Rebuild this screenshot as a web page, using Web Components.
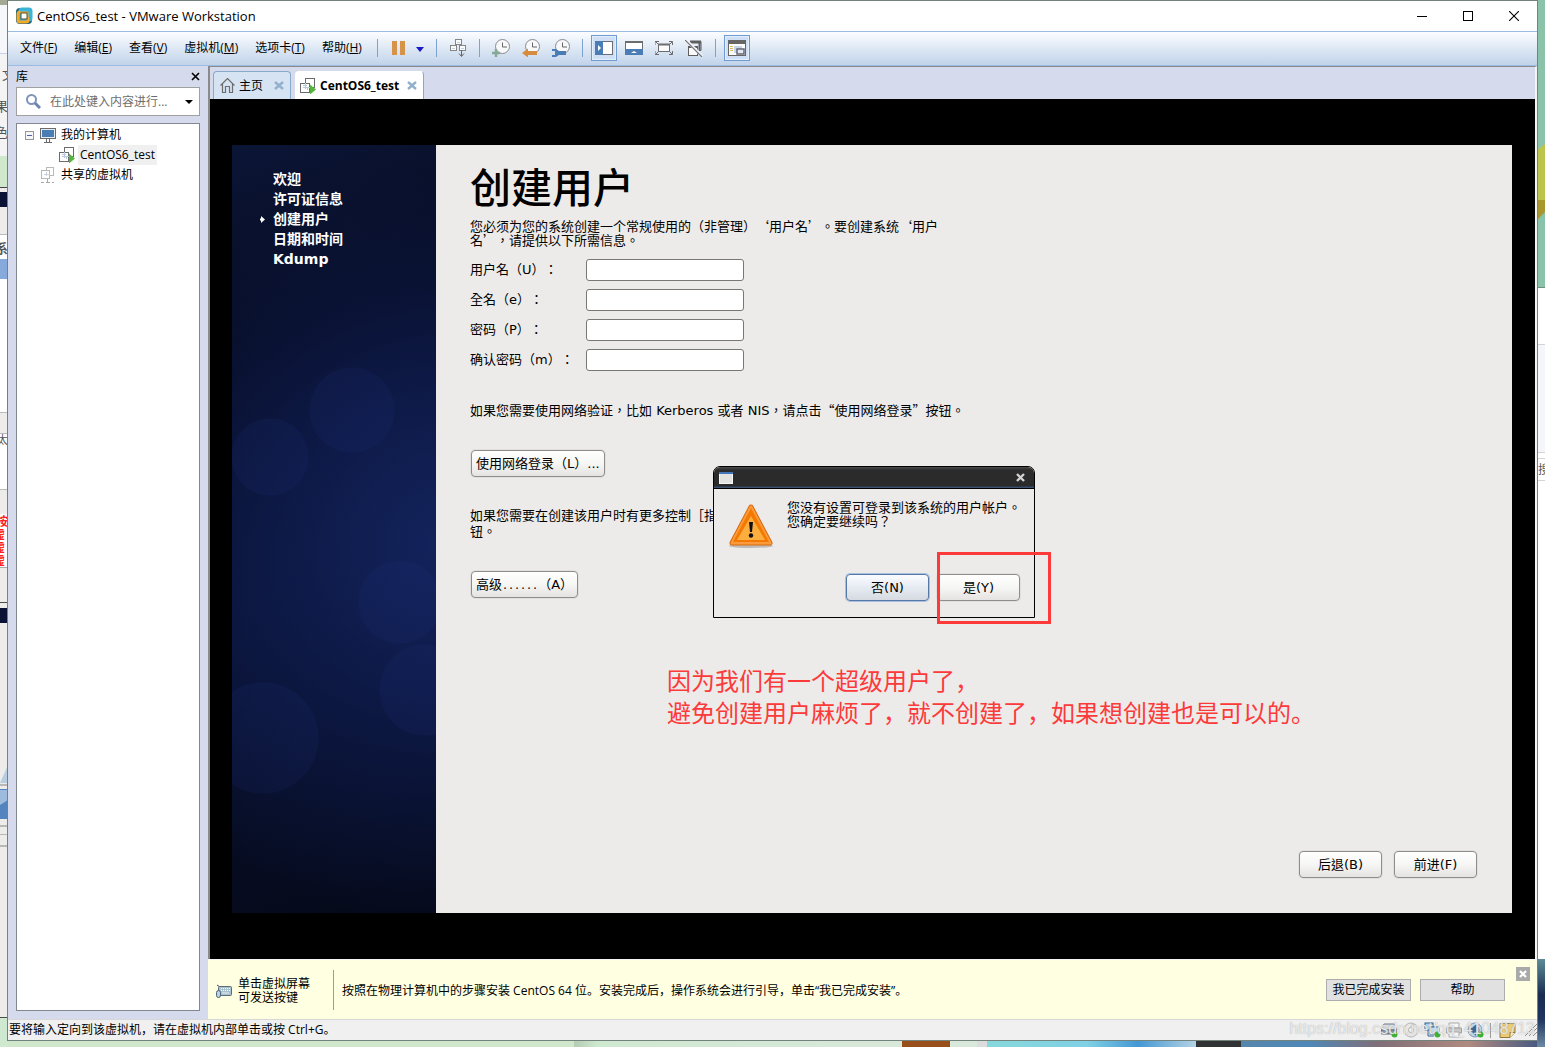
<!DOCTYPE html>
<html lang="zh-CN">
<head>
<meta charset="utf-8">
<title>CentOS6_test - VMware Workstation</title>
<style>
    body {
        margin: 0;
        background: #cfe6d0;
        color: #000;
        font: 12px/16px "Open Sans", "Noto Sans CJK SC", sans-serif;
    }
</style>
</head>
<body>
<host-desktop>
    <vm-window>
        <title-bar slot="title">CentOS6_test - VMware Workstation</title-bar>
        <menu-bar slot="menu"></menu-bar>
        <library-panel slot="library"></library-panel>
        <tab-bar slot="tabs"></tab-bar>
        <!-- the guest centres its punctuation, as the zh-TW glyphs do -->
        <guest-screen slot="screen" lang="zh-TW">
            <setup-steps slot="steps"></setup-steps>
            <user-form slot="form"></user-form>
            <gtk-dialog slot="overlay"></gtk-dialog>
            <screen-note slot="overlay" lang="zh-CN">因为我们有一个超级用户了，<br>避免创建用户麻烦了，就不创建了，如果想创建也是可以的。</screen-note>
        </guest-screen>
        <hint-bar slot="hint"></hint-bar>
        <status-bar slot="status">要将输入定向到该虚拟机，请在虚拟机内部单击或按 Ctrl+G。</status-bar>
    </vm-window>
</host-desktop>

<script>
// every element here is a fixed template in an open shadow root
class BaseElement extends HTMLElement {
    constructor() {
        super();
        this._shadowDOM = this.attachShadow({mode: "open"});
    }

    connectedCallback() {
        this._shadowDOM.innerHTML = this.render();
    }
}

const ICONS = {
    logo: [18, 18, `
        <rect x="1" y="1" width="16" height="16" rx="4" fill="#1d5f78"/>
        <rect x="5" y="2" width="11" height="11" rx="2" fill="none" stroke="#3cb4d8" stroke-width="3"/>
        <rect x="3" y="5" width="10" height="10" rx="2" fill="none" stroke="#f3a92c" stroke-width="3"/>
        <path d="M5 3h9q1 0 1 1v6" fill="none" stroke="#3cb4d8" stroke-width="3"/>
        <rect x="6" y="6" width="6" height="6" fill="#fff" stroke="#5a4a20"/>`],
    minimize: [10, 10, `<path d="M0 5.500h10" stroke="#000"/>`],
    maximize: [10, 10, `<rect x=".5" y=".5" width="9" height="9" fill="none" stroke="#000"/>`],
    close: [10, 10, `<path d="M0 0l10 10M10 0L0 10" stroke="#000" stroke-width="1.100"/>`],
    pause: [14, 14, `<path d="M0 0h5v14H0zM8 0h5v14H8z" fill="#d6944a"/>`],
    drop: [8, 5, `<path d="M0 0h8L4 5z" fill="#1a1ac8"/>`],
    send: [16, 18, `
        <g fill="#f8fafc" stroke="#858585"><rect x="5.500" y=".5" width="6" height="5"/><rect x=".5" y="6.500" width="6" height="5"/><rect x="9.500" y="6.500" width="6" height="5"/></g>
        <path d="M7 3.500h3M2 9.500h3M11 9.500h3" stroke="#c3cede"/>
        <path d="M11.500 11v6M9 14.500l2.500 3 2.500-3" fill="none" stroke="#666"/>`],
    snap: [18, 18, `
        <circle cx="10.500" cy="7.500" r="7" fill="#f7f8fa" stroke="#8a8a8a"/><path d="M10.500 3.500v4.500H15" fill="none" stroke="#666"/>
        <path d="M4 10v8M0 14h8" stroke="#86a896" stroke-width="2.500"/>`],
    revert: [18, 18, `
        <circle cx="10.500" cy="7.500" r="7" fill="#f7f8fa" stroke="#8a8a8a"/><path d="M10.500 3.500v4.500H15" fill="none" stroke="#666"/>
        <path d="M0 14l6-4.500V12h9v4H6v2.500z" fill="#d68c3c"/>`],
    manage: [18, 18, `
        <circle cx="10.500" cy="7.500" r="7" fill="#f7f8fa" stroke="#8a8a8a"/><path d="M10.500 3.500v4.500H15" fill="none" stroke="#666"/>
        <path d="M0 10h4l3 2h7v4H7l-3 2H0v-2h3v-4H0z" fill="#4a7db5"/>`],
    library: [18, 14, `
        <rect x=".5" y=".5" width="17" height="13" fill="#fff" stroke="#6d6d6d"/><path d="M0 0h8v14H0z" fill="#4a7db5"/>
        <path d="M3 4l3 3-3 3z" fill="#fff"/>`],
    thumbs: [18, 14, `
        <rect x=".5" y=".5" width="17" height="13" fill="#fff" stroke="#6d6d6d"/><path d="M0 8h18v6H0z" fill="#4a7db5"/>
        <path d="M6 12l3-2 3 2z" fill="#fff"/><path d="M0 1h18" stroke="#6d6d6d" stroke-width="2"/>`],
    full: [18, 14, `
        <rect x="3.500" y="3.500" width="11" height="7" fill="#fafafa" stroke="#6d6d6d"/><path d="M3 3.500h12" stroke="#6d6d6d" stroke-width="2"/>
        <path d="M0 4V.5h4M14 .5h3.500V4M0 10v3.500h4M14 13.500h3.500V10M1 1l3 3M17 1l-3 3M1 13l3-3M17 13l-3-3" fill="none" stroke="#6d6d6d"/>`],
    unity: [18, 17, `
        <path d="M5 1.500h11v9h-2" fill="none" stroke="#5e5e5e"/><path d="M5 2h11" stroke="#5e5e5e" stroke-width="3"/><path d="M14.500 1v10" stroke="#5e5e5e" stroke-width="2"/>
        <rect x="3.500" y="6.500" width="9" height="9" fill="#fafafa" stroke="#5e5e5e"/><path d="M3 7h10" stroke="#5e5e5e" stroke-width="2"/>
        <path d="M1 0l17 17" stroke="#eef3fa" stroke-width="3"/><path d="M0 0l17 17" stroke="#777" stroke-width="1.200"/>`],
    consoleView: [18, 16, `
        <rect x=".5" y=".5" width="17" height="15" fill="#fdfdfd" stroke="#666"/><path d="M0 2h18" stroke="#666" stroke-width="4"/>
        <path d="M2 6.500h3M2 8.500h3M2 10.500h3" stroke="#e0b860"/><path d="M6 6h8v7H6z" fill="#c8d6ea"/>
        <rect x="9" y="9" width="7" height="5" fill="#e2e9f3" stroke="#667" stroke-width="1.500"/>`],
    search: [15, 15, `<circle cx="5.500" cy="5.500" r="4.500" fill="none" stroke="#7d93b8" stroke-width="2"/><path d="M9 9l5 5" stroke="#6d85b0" stroke-width="3"/>`],
    caret: [8, 4, `<path d="M0 0h8L4 4z" fill="#000"/>`],
    cross: [9, 9, `<path d="M1 1l7 7M8 1L1 8" stroke="#000" stroke-width="1.600"/>`],
    tabClose: [10, 9, `<path d="M1 1l8 7M9 1L1 8" stroke="#92b0cc" stroke-width="2.400"/>`],
    home: [15, 15, `<path d="M.5 7.500l7-7 7 7M2.500 6v8.500h3v-6h4v6h3V6" fill="none" stroke="#6d6d6d" stroke-width="1.200"/>`],
    vm: [16, 16, `
        <rect x="5.500" y=".5" width="9" height="9" fill="#fff" stroke="#6b6b6b"/><rect x=".5" y="5.500" width="9" height="9" fill="#fff" stroke="#6b6b6b"/>
        <path d="M5.500 4v7M3 9.500h7M3 7.500h4M7.500 9v3" stroke="#b9c9dd"/><path d="M5.500 5V.5h9v6" fill="none" stroke="#6b6b6b"/>
        <path d="M10 6.500l6 5-6 5z" fill="#55b53c"/>`],
    shared: [14, 16, `
        <g fill="#fff" stroke="#b8b8b8"><rect x="5.500" y=".5" width="7" height="8"/><rect x=".5" y="3.500" width="8" height="8"/></g>
        <path d="M6.500 12v3M0 15.500h3M5 15.500h4M11 15.500h2" stroke="#a8a8a8"/><path d="M3 7.500h6M5.500 5v4" stroke="#ccd3dd"/>`],
    computer: [16, 15, `
        <rect x=".5" y=".5" width="15" height="10" fill="#4a7db5" stroke="#6b6b6b"/><rect x="1.500" y="1.500" width="13" height="8" fill="none" stroke="#e4ecf5"/>
        <path d="M6.500 11v3M9.500 11v3M4 14.500h8" stroke="#6b6b6b"/>`],
    minus: [9, 9, `<rect x=".5" y=".5" width="8" height="8" fill="#f6f6f6" stroke="#969696"/><path d="M2 4.500h5" stroke="#4b63a7"/>`],
    keyboard: [17, 15, `
        <path d="M1 1l3 2" stroke="#444"/><rect x="2.500" y="2.500" width="13" height="9" rx="1" fill="#a9c0ce" stroke="#5d6c77"/>
        <path d="M5 4.500h9M5 6.500h9" stroke="#fff" stroke-dasharray="1 1"/><path d="M6 9h7" stroke="#e6eff5"/>
        <rect x=".5" y="6.500" width="4" height="7" rx="2" fill="#b6d3ea" stroke="#4d6477"/>`],
    hintClose: [14, 14, `<path d="M0 0h14v14H0z" fill="#a9a9a9"/><path d="M4 4l6 6M10 4l-6 6" stroke="#fff" stroke-width="2.200"/>`],
    disk: [17, 16, `
        <path d="M3 2h10l3 6H0z" fill="#d3dae2" stroke="#6f7a86"/><path d="M.5 8h15v4H.5z" fill="#8696a8" stroke="#5b6673"/>
        <circle cx="13.500" cy="12.500" r="3" fill="#3faf35"/>`],
    cd: [16, 16, `<circle cx="8" cy="8" r="7" fill="#e7e7e7" stroke="#b3b3b3"/><circle cx="8" cy="8" r="2.500" fill="#f8f8f8" stroke="#b3b3b3"/><path d="M8 5.500L11 2" stroke="#ccc" stroke-width="2"/>`],
    net: [17, 16, `
        <rect x="1" y="1" width="8" height="7" fill="#a9d3f0" stroke="#31618e"/><rect x="6" y="5" width="9" height="7" fill="#bfe0f7" stroke="#31618e"/>
        <path d="M4 8v6h6" fill="none" stroke="#31618e"/><circle cx="13.500" cy="12.500" r="3" fill="#3faf35"/>`],
    printer: [16, 16, `<path d="M3 1h10v5H3z" fill="#f6f6f6" stroke="#a9a9a9"/><path d="M.5 6h15v5H.5z" fill="#c9c9c9" stroke="#a0a0a0"/><path d="M3 10h10v5H3z" fill="#f6f6f6" stroke="#a9a9a9"/>`],
    sound: [17, 16, `
        <circle cx="8" cy="8" r="7" fill="#b8d5ec" stroke="#7b9ab5"/><path d="M3 6h2l4-4v12L5 10H3z" fill="#3b6892"/>
        <path d="M11 5q2 3 0 6" fill="none" stroke="#3b6892"/><circle cx="13.500" cy="12.500" r="3" fill="#3faf35"/>`],
    note: [17, 15, `<path d="M1 .5h15v9l-5 5H1z" fill="#ecca76" stroke="#8f7a3c"/><path d="M16 9.500h-5v5" fill="#fff1bb" stroke="#8f7a3c"/>`],
    grip: [12, 12, `<path d="M0 12L12 0M4 12l8-8M8 12l4-4" stroke="#8c8c8c"/>`],
    arrow: [5, 7, `<path d="M1 0l4 3.500L1 7V4.500H0v-2h1z" fill="#fff"/>`],
    dialogIcon: [14, 12, `<rect x=".5" y=".5" width="13" height="11" fill="#e2e2df" stroke="#f7f7f7"/><path d="M0 1h14" stroke="#4376b8" stroke-width="2"/>`],
    dialogClose: [9, 9, `<path d="M1 1l7 7M8 1L1 8" stroke="#d2d2d2" stroke-width="2.400"/>`],
    warning: [46, 46, `
        <defs><linearGradient id="w" x2="0" y2="1"><stop offset="0" stop-color="#f9a04e"/><stop offset="1" stop-color="#f57900"/></linearGradient></defs>
        <ellipse cx="23" cy="43" rx="22" ry="2" fill="#000" opacity=".2"/>
        <path d="M23 4L42 40H4z" fill="url(#w)" stroke="#d9680c" stroke-width="5" stroke-linejoin="round"/>
        <path d="M23 4L42 40H4z" fill="#f57900" stroke="#fa9c3e" stroke-width="3" stroke-linejoin="round"/>
        <path d="M23 5L41 39H5z" fill="#f57900"/><path d="M23 13L37 37H9z" fill="#fcaf3e"/>
        <path d="M21 19h4l-1 10h-2z" fill="#111"/><circle cx="23" cy="32.500" r="2.200" fill="#111"/>`]
};

class VmIcon extends BaseElement {
    render() {
        const [width, height, shapes] = ICONS[this.getAttribute("name")];
        return `
        <style>
            :host { display: inline-flex; flex: none; }
            svg { display: block; }
        </style>
        <svg width="${width}" height="${height}" viewBox="0 0 ${width} ${height}" aria-hidden="true">${shapes}</svg>`;
    }
}

/* The desktop shows only as thin strips round the window. */
class HostDesktop extends BaseElement {
    render() {
        return `
        <style>
            :host {
                display: grid;
                grid-template: "left top right" 1px "left window right" 1fr "left bottom right" 7px / 8px minmax(0, 1fr) 8px;
                min-height: 100vh;
            }
            svg { display: block; width: 8px; height: 100%; overflow: hidden; }
            .left { grid-area: left; background: #cfe8d0; height: 0; min-height: 100%; }
            .right { grid-area: right; background: linear-gradient(#5d8c98, #1a2c50 36px, #20345e 60px, #6d8aa4) left bottom / 8px 88px no-repeat #fff; height: 0; min-height: 100%; }
            .top { grid-area: top; background: #6d7f78; }
            .bottom {
                grid-area: bottom;
                background: linear-gradient(90deg, #cfe8cc 566px, #b4ccb4 566px, #cfe8d0 590px, #d8e8da 894px, #984f1a 894px, #984f1a 942px,
                    #d8e8da 942px, #d8e8da 969px, #dcdcdc 969px, #dcdcdc 979px, #86d8dc 979px, #7fd0e4 1080px, #4498d4 1130px, #b4d2e4 1188px,
                    #303234 1188px, #303234 1233px, #5686ac 1233px, #4e88b8 1300px, #806e78 1370px, #b08a80 1460px, #4a5a80);
            }
            ::slotted(*) { grid-area: window; }
        </style>
        <div class="left"><svg aria-hidden="true" font-family="Noto Sans CJK SC" font-size="13" fill="#555">
            <path fill="#a4a993" d="M0 0h8v5H0z"/><path fill="#f6f7fb" d="M0 5h8v48H0z"/><path fill="#c9d2e6" d="M0 53h8v1H0z"/>
            <path fill="#f4f4f4" d="M0 54h8v102H0z"/><path fill="#cfe8cc" d="M0 156h8v31H0z"/><path fill="#444" d="M0 187h8v1H0z"/>
            <path fill="#edecea" d="M0 188h8v829H0z"/><path fill="#0a1333" d="M0 192h8v15H0zM0 608h8v15H0z"/>
            <path fill="#fff" d="M0 235h8v177H0zM0 434h8v55H0z"/><path fill="#86aadb" d="M0 259h8v20H0z"/>
            <path fill="#bbb" d="M0 234h8v1H0zM0 412h8v1H0zM0 433h8v1H0zM0 489h8v1H0z"/>
            <path fill="#fff" d="M0 514h8v53H0z"/><path fill="#aaa" d="M0 567h8v1H0z"/><path fill="#465046" d="M0 602h8v1H0zM0 1017h8v1H0z"/>
            <path fill="#b7cde3" d="M0 783l8-18v18z"/><path fill="#5484be" d="M0 789h8v30H0z"/><path fill="#9dbbdc" d="M0 790h8v10L0 805z"/>
            <path fill="#b8b8b6" d="M0 784h8v2H0zM0 825h8v2H0zM0 834h8v1H0zM0 845h8v2H0z"/>
            <text x="2" y="79">文</text><text x="-5" y="111">果</text><text x="-5" y="137">色</text>
            <text x="-5" y="253" font-weight="700">系</text><text x="-3" y="444" font-size="11">太</text>
            <g fill="#f22" font-size="12" font-weight="700"><text x="-4" y="526">按</text><text x="-7" y="539">虚</text><text x="-7" y="552">虚</text><text x="-7" y="565">虚</text></g>
        </svg></div>
        <div class="top"></div>
        <div class="right"><svg aria-hidden="true">
            <path fill="#8bc2aa" d="M0 0h8v287H0z"/><path fill="#bcc44b" d="M0 150l8-6v56H0z"/><path fill="#a8962f" d="M0 200h8v12l-8 8z"/>
            <path fill="#6e8f7c" d="M0 287h8v1H0z"/><path fill="#f5f6fa" d="M0 345h8v107H0z"/>
            <path fill="#d4d4d8" d="M0 344h8v1H0zM0 452h8v1H0zM0 458h8v1H0zM0 480h8v1H0z"/>
            <text x="1" y="474" font-family="Noto Sans CJK SC" font-size="12" fill="#555">搜</text>
        </svg></div>
        <div class="bottom"></div>
        <slot></slot>`;
    }
}

class VmWindow extends BaseElement {
    render() {
        return `
        <style>
            :host {
                display: flex;
                flex-direction: column;
                background: #d5daec;
                box-shadow: 0 0 0 1px #74827c;
            }
            .body { flex: 1; display: grid; grid-template-columns: 200px minmax(0, 1fr); }
            .main { display: flex; flex-direction: column; }
            .view {
                flex: 1;
                display: flex;
                flex-direction: column;
                border: solid #8a8a8a;
                border-width: 1px 0 0 2px;
                border-right: 2px solid #f4f4f4;
            }
            slot[name="screen"]::slotted(*) { flex: 1; }
        </style>
        <slot name="title"></slot>
        <slot name="menu"></slot>
        <div class="body">
            <slot name="library"></slot>
            <div class="main">
                <div class="view"><slot name="tabs"></slot><slot name="screen"></slot></div>
                <slot name="hint"></slot>
            </div>
        </div>
        <slot name="status"></slot>`;
    }
}

class TitleBar extends BaseElement {
    render() {
        return `
        <style>
            :host { display: flex; align-items: center; height: 30px; padding-left: 7px; background: #fff; font-size: 13px; }
            .text { flex: 1; padding-left: 4px; }
            button { display: grid; place-items: center; width: 46px; height: 30px; padding: 0; border: 0; background: none; }
        </style>
        <vm-icon name="logo"></vm-icon>
        <span class="text"><slot></slot></span>
        <button aria-label="最小化"><vm-icon name="minimize"></vm-icon></button>
        <button aria-label="最大化"><vm-icon name="maximize"></vm-icon></button>
        <button aria-label="关闭"><vm-icon name="close"></vm-icon></button>`;
    }
}

class MenuBar extends BaseElement {
    render() {
        const menus = [["文件", "F"], ["编辑", "E"], ["查看", "V"], ["虚拟机", "M"], ["选项卡", "T"], ["帮助", "H"]];
        const tool = (name, label, on) => `<button class="tool ${on ? "on" : ""}" aria-label="${label}"><vm-icon name="${name}"></vm-icon></button>`;
        return `
        <style>
            :host {
                display: flex;
                align-items: center;
                height: 32px;
                padding: 0 0 1px 12px;
                border: 1px solid #9cbbe0;
                border-width: 1px 0;
                background: linear-gradient(#fbfdff, #c1d3ea);
            }
            button { padding: 0; border: 0; background: none; color: inherit; font: inherit; }
            .menus { display: flex; gap: 17px; }
            .tools { display: flex; align-items: center; gap: 4px; margin-left: 15px; }
            .tool { box-sizing: border-box; display: grid; place-items: center; width: 26px; height: 26px; }
            .on { border: 1px solid #6f9bd1; background: #cfe0f6; box-shadow: inset 0 0 0 1px #e4effc; }
            .power { display: flex; }
            .drop { width: 16px; }
            i { width: 1px; height: 18px; margin: 0 4px; background: #7ba2d0; }
            i:first-child { margin-left: 0; }
        </style>
        <nav class="menus">${menus.map(([text, key]) => `<button>${text}(<u>${key}</u>)</button>`).join("")}</nav>
        <div class="tools">
            <i></i>
            <div class="power">${tool("pause", "挂起")}<button class="drop" aria-label="电源"><vm-icon name="drop"></vm-icon></button></div>
            <i></i>
            ${tool("send", "发送 Ctrl+Alt+Del")}
            <i></i>
            ${tool("snap", "拍摄快照")}${tool("revert", "恢复快照")}${tool("manage", "管理快照")}
            <i></i>
            ${tool("library", "显示库", true)}${tool("thumbs", "显示缩略图")}${tool("full", "全屏")}${tool("unity", "Unity")}
            <i></i>
            ${tool("consoleView", "控制台视图", true)}
        </div>`;
    }
}

class LibraryPanel extends BaseElement {
    render() {
        return `
        <style>
            :host { display: flex; flex-direction: column; padding: 0 8px 8px; }
            header { display: flex; align-items: center; justify-content: space-between; height: 21px; }
            button { display: grid; place-items: center; padding: 0; border: 0; background: none; }
            .search { display: flex; align-items: center; height: 27px; padding: 0 6px 0 9px; margin-bottom: 7px; border: 1px solid #a0a0a0; background: #fff; }
            input { flex: 1; min-width: 0; padding: 0 0 0 9px; border: 0; outline: 0; background: none; font: inherit; }
            input::placeholder { color: #6d6d6d; }
            ul { flex: 1; margin: 0; padding: 1px 0 0 8px; border: 1px solid #828790; background: #fff; list-style: none; }
            li { display: flex; align-items: center; height: 20px; }
            li span { padding: 0 2px; margin-left: 3px; line-height: 20px; }
            li vm-icon:first-child { margin-right: 6px; }
            li.child { padding-left: 34px; }
            li.child vm-icon, li.shared vm-icon { margin-right: 0; }
            li.child span { margin-left: 3px; background: #f0f0f0; }
            li.shared { padding-left: 16px; }
            li.shared span { margin-left: 4px; }
        </style>
        <header>库<button aria-label="关闭库"><vm-icon name="cross"></vm-icon></button></header>
        <div class="search">
            <vm-icon name="search"></vm-icon>
            <input type="text" aria-label="搜索" placeholder="在此处键入内容进行...">
            <button aria-label="搜索选项"><vm-icon name="caret"></vm-icon></button>
        </div>
        <ul>
            <li><vm-icon name="minus"></vm-icon><vm-icon name="computer"></vm-icon><span>我的计算机</span></li>
            <li class="child"><vm-icon name="vm"></vm-icon><span>CentOS6_test</span></li>
            <li class="shared"><vm-icon name="shared"></vm-icon><span>共享的虚拟机</span></li>
        </ul>`;
    }
}

class TabBar extends BaseElement {
    render() {
        return `
        <style>
            :host { display: flex; align-items: flex-end; gap: 4px; height: 32px; padding-left: 3px; }
            button {
                box-sizing: border-box;
                display: flex;
                align-items: center;
                height: 28px;
                padding: 0 6px;
                border: 1px solid #86a8cb;
                border-bottom: 0;
                border-radius: 4px 4px 0 0;
                background: #d6e3f2;
                color: inherit;
                font: inherit;
            }
            .active { background: #fff; border-left-color: #fff; border-top-color: #fff; padding: 0 6px 0 4px; font-weight: 700; }
            span { padding: 0 11px 0 4px; }
            .active span { padding-right: 8px; }
        </style>
        <button><vm-icon name="home"></vm-icon><span>主页</span><vm-icon name="tabClose"></vm-icon></button>
        <button class="active"><vm-icon name="vm"></vm-icon><span>CentOS6_test</span><vm-icon name="tabClose"></vm-icon></button>`;
    }
}

class GuestScreen extends BaseElement {
    render() {
        return `
        <style>
            :host {
                display: flex;
                padding: 46px 23px 46px 22px;
                background: #000;
                font: 13px/16px "DejaVu Sans", "Noto Sans CJK TC", sans-serif;
                text-spacing-trim: space-all;
            }
            .screen { position: relative; flex: 1; display: grid; grid-template-columns: 204px minmax(0, 1fr); background: #edebea; }
        </style>
        <div class="screen">
            <slot name="steps"></slot>
            <slot name="form"></slot>
            <slot name="overlay"></slot>
        </div>`;
    }
}

class SetupSteps extends BaseElement {
    render() {
        const spot = (x, y, r) => `radial-gradient(circle at ${x}px ${y}px, rgba(38, 58, 150, .1) ${r}px, transparent ${r + 1}px)`;
        return `
        <style>
            :host {
                display: block;
                padding: 24px 0 0 28px;
                background:
                    ${spot(120, 265, 42)}, ${spot(38, 312, 38)}, ${spot(168, 457, 41)}, ${spot(193, 545, 45)}, ${spot(31, 593, 55)},
                    radial-gradient(circle at 105% 52%, #13235c, rgba(15, 28, 78, .75) 170px, transparent 380px),
                    linear-gradient(160deg, #0b1536, #060b20 25%, #081130 55%, #050919);
                color: #fff;
                font-size: 14px;
                font-weight: 700;
            }
            ol { margin: 0; padding: 0; list-style: none; }
            li { display: flex; align-items: center; height: 20px; padding-left: 13px; }
            .current { padding-left: 0; gap: 8px; }
        </style>
        <ol>
            <li>欢迎</li>
            <li>许可证信息</li>
            <li class="current"><vm-icon name="arrow"></vm-icon>创建用户</li>
            <li>日期和时间</li>
            <li>Kdump</li>
        </ol>`;
    }
}

class GtkButton extends BaseElement {
    render() {
        return `
        <style>
            :host { display: inline-block; }
            button {
                box-sizing: border-box;
                min-width: 83px;
                height: 27px;
                padding: 0 4px;
                border: 1px solid #8e8d8b;
                border-radius: 4px;
                background: linear-gradient(#fff, #f6f6f5 50%, #e4e3e1);
                box-shadow: 0 0 0 1px #e2e0de;
                color: #000;
                font: inherit;
                white-space: nowrap;
            }
            :host([focused]) button { border-color: #5478a8; background: linear-gradient(#fafcff, #e6ebf3 50%, #d6dae0); box-shadow: 0 0 0 1px #a9c0e0; }
        </style>
        <button><slot></slot></button>`;
    }
}

class GtkField extends BaseElement {
    render() {
        return `
        <style>
            :host { display: grid; grid-template-columns: 116px 158px; align-items: center; }
            label { white-space: nowrap; }
            input {
                box-sizing: border-box;
                width: 100%;
                height: 22px;
                padding: 0 4px;
                border: 1px solid #787774;
                border-radius: 3px;
                outline: 0;
                background: #fff;
                font: inherit;
            }
        </style>
        <label for="value"><slot></slot></label>
        <input id="value" type="${this.getAttribute("type") || "text"}">`;
    }
}

class UserForm extends BaseElement {
    render() {
        return `
        <style>
            :host { display: flex; flex-direction: column; padding: 20px 35px 35px 34px; }
            h1 { margin: 0 0 7px; font-size: 41px; line-height: 48px; font-weight: 500; }
            p { margin: 31px 0; }
            .intro { margin: 0 0 11px; line-height: 14px; }
            .wide { font-family: "Noto Sans CJK TC", sans-serif; line-height: 0; }
            .dots { font: 10px/0 "DejaVu Sans Mono", monospace; }
            .fields { display: grid; gap: 8px; padding-bottom: 1px; }
            .inline { align-self: flex-start; margin-left: 1px; }
            footer { display: flex; justify-content: flex-end; gap: 12px; margin-top: auto; }
        </style>
        <h1>创建用户</h1>
        <p class="intro">您必须为您的系统创建一个常规使用的（非管理）<span class="wide">‘</span>用户名<span class="wide">’</span>。要创建系统<span class="wide">‘</span>用户<br>名<span class="wide">’</span>，请提供以下所需信息。</p>
        <div class="fields">
            <gtk-field>用户名（U）：</gtk-field>
            <gtk-field>全名（e）：</gtk-field>
            <gtk-field type="password">密码（P）：</gtk-field>
            <gtk-field type="password">确认密码（m）：</gtk-field>
        </div>
        <p>如果您需要使用网络验证，比如 Kerberos 或者 NIS，请点击<span class="wide">“</span>使用网络登录<span class="wide">”</span>按钮。</p>
        <gtk-button class="inline">使用网络登录（L）...</gtk-button>
        <p>如果您需要在创建该用户时有更多控制［指<br>钮。</p>
        <gtk-button class="inline">高级<span class="dots">......</span>（A）</gtk-button>
        <footer>
            <gtk-button>后退(B)</gtk-button>
            <gtk-button>前进(F)</gtk-button>
        </footer>`;
    }
}

class GtkDialog extends BaseElement {
    render() {
        return `
        <style>
            :host { position: absolute; left: calc(50% - 159px); top: 321px; width: 322px; }
            .window { border: 1px solid #000; border-radius: 7px 7px 0 0; background: #edebea; overflow: hidden; }
            header {
                display: flex;
                align-items: center;
                justify-content: space-between;
                height: 21px;
                padding: 0 9px 0 5px;
                border-bottom: 1px solid #000;
                background: linear-gradient(#4a4a4a, #2c2c2c 3px, #2a2a2a 19px, #3f5f8a);
            }
            header button { display: grid; place-items: center; padding: 0; border: 0; background: none; }
            .message { display: flex; gap: 13px; padding: 14px 0 0 14px; line-height: 14px; }
            p { margin: -2px 0 0; white-space: nowrap; }
            footer { display: flex; justify-content: flex-end; gap: 8px; padding: 25px 14px 16px; }
            .mark { position: absolute; left: 224px; top: 86px; box-sizing: border-box; width: 114px; height: 72px; border: 3px solid #fc3a3a; }
        </style>
        <div class="window" role="dialog">
            <header><vm-icon name="dialogIcon"></vm-icon><button aria-label="关闭"><vm-icon name="dialogClose"></vm-icon></button></header>
            <div class="message">
                <vm-icon name="warning"></vm-icon>
                <p>您没有设置可登录到该系统的用户帐户。<br>您确定要继续吗？</p>
            </div>
            <footer>
                <gtk-button focused>否(N)</gtk-button>
                <gtk-button>是(Y)</gtk-button>
            </footer>
        </div>
        <div class="mark"></div>`;
    }
}

class ScreenNote extends BaseElement {
    render() {
        return `
        <style>
            :host {
                position: absolute;
                left: calc(50% - 205px);
                top: 519px;
                color: #fc3a3a;
                font: 24px/32px "Noto Sans CJK SC", sans-serif;
                white-space: nowrap;
            }
        </style>
        <slot></slot>`;
    }
}

class HintBar extends BaseElement {
    render() {
        return `
        <style>
            :host { display: flex; align-items: center; height: 59px; padding-left: 8px; border-top: 1px solid #f4f4f4; background: #ffffe1; }
            .keys { display: flex; align-items: center; gap: 5px; width: 117px; padding-top: 3px; line-height: 14px; }
            .text { flex: 1; padding: 13px 0 11px 8px; border-left: 1px solid #9a9aa8; }
            button {
                box-sizing: border-box;
                width: 85px;
                height: 22px;
                margin-right: 9px;
                padding: 0;
                border: 1px solid #adadad;
                background: #e1e1e1;
                color: #000;
                font: inherit;
            }
            .close { display: grid; width: 14px; height: 14px; margin: 0 7px 31px 2px; border: 0; }
        </style>
        <div class="keys"><vm-icon name="keyboard"></vm-icon><span>单击虚拟屏幕<br>可发送按键</span></div>
        <div class="text">按照在物理计算机中的步骤安装 CentOS 64 位。安装完成后，操作系统会进行引导，单击“我已完成安装”。</div>
        <button>我已完成安装</button>
        <button>帮助</button>
        <button class="close" aria-label="关闭提示"><vm-icon name="hintClose"></vm-icon></button>`;
    }
}

class StatusBar extends BaseElement {
    render() {
        return `
        <style>
            :host { position: relative; display: flex; align-items: center; height: 20px; padding-left: 1px; border-top: 1px solid #d7d7d7; background: #f0f0f0; }
            .text { flex: 1; }
            .devices { display: flex; align-items: center; gap: 5px; }
            i { width: 1px; height: 15px; margin: 0 3px 0 1px; background: #9a9a9a; }
            vm-icon[name="grip"] { margin-left: 4px; }
            .watermark {
                position: absolute;
                right: 2px;
                top: -1px;
                color: rgba(255, 255, 255, .75);
                font: 16px/20px "Liberation Sans", sans-serif;
                text-shadow: 0 0 1px #999;
            }
        </style>
        <span class="text"><slot></slot></span>
        <div class="devices">
            <vm-icon name="disk"></vm-icon><vm-icon name="cd"></vm-icon><vm-icon name="net"></vm-icon><vm-icon name="printer"></vm-icon><vm-icon name="sound"></vm-icon>
            <i></i>
            <vm-icon name="note"></vm-icon><vm-icon name="grip"></vm-icon>
        </div>
        <span class="watermark">https://blog.csdn.net/qq_41048713</span>`;
    }
}

customElements.define("vm-icon", VmIcon);
customElements.define("host-desktop", HostDesktop);
customElements.define("vm-window", VmWindow);
customElements.define("title-bar", TitleBar);
customElements.define("menu-bar", MenuBar);
customElements.define("library-panel", LibraryPanel);
customElements.define("tab-bar", TabBar);
customElements.define("guest-screen", GuestScreen);
customElements.define("setup-steps", SetupSteps);
customElements.define("gtk-button", GtkButton);
customElements.define("gtk-field", GtkField);
customElements.define("user-form", UserForm);
customElements.define("gtk-dialog", GtkDialog);
customElements.define("screen-note", ScreenNote);
customElements.define("hint-bar", HintBar);
customElements.define("status-bar", StatusBar);
</script>
</body>
</html>
